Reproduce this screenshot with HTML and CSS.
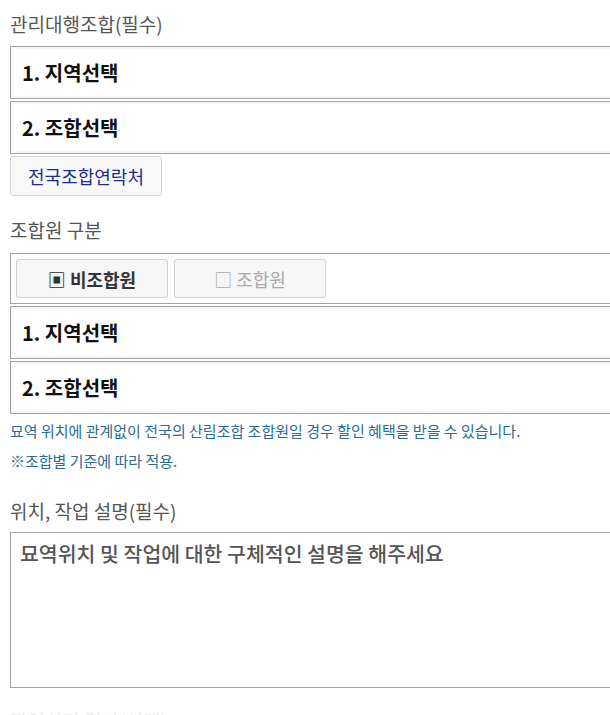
FILE: index.html
```html
<!DOCTYPE html>
<html>
<head>
    <title>관리대행 신청</title>
    <link rel="stylesheet" href="styles.css">
</head>
<body>
    <div class="form">
        <div class="field-label">관리대행조합(필수)</div>
        <div class="select-box">1. 지역선택</div>
        <div class="select-box">2. 조합선택</div>
        <button class="contact-btn">전국조합연락처</button>

        <div class="field-label gap-top">조합원 구분</div>
        <div class="member-box">
            <button class="member-btn active">▣ 비조합원</button>
            <button class="member-btn">□ 조합원</button>
        </div>
        <div class="select-box">1. 지역선택</div>
        <div class="select-box">2. 조합선택</div>
        <p class="note">묘역 위치에 관계없이 전국의 산림조합 조합원일 경우 할인 혜택을 받을 수 있습니다.</p>
        <p class="note second">※조합별 기준에 따라 적용.</p>

        <div class="field-label gap-top2">위치, 작업 설명(필수)</div>
        <textarea class="desc" placeholder="묘역위치 및 작업에 대한 구체적인 설명을 해주세요"></textarea>

        <div class="field-label faint">작업희망 일자(선택)</div>
    </div>
</body>
</html>
```

FILE: styles.css
```css
html, body {
    overflow: hidden;
}
body {
    margin: 0;
    background-color: #ffffff;
    font-family: "Noto Sans CJK KR", "Noto Sans", sans-serif;
    color: #333;
}
.form {
    width: 660px;
    padding: 10px 10px;
}
.field-label {
    font-size: 19px;
    color: #555;
    height: 28px;
    line-height: 28px;
    margin-bottom: 8px;
}
.gap-top {
    margin-top: 20px;
    margin-bottom: 9px;
}
.gap-top2 {
    margin-top: 26px;
    margin-bottom: 7px;
}
.faint {
    margin-top: 19px;
    color: #ececec;
}
.select-box {
    height: 51px;
    border: 1px solid #a3a3a3;
    box-shadow: inset 0 0 0 2px #f7f7f7;
    padding-left: 11px;
    font-size: 20px;
    font-weight: bold;
    color: #111;
    line-height: 51px;
    margin-bottom: 2px;
}
.contact-btn {
    display: block;
    width: 152px;
    height: 40px;
    margin-top: 1px;
    background-color: #f8f8f8;
    border: 1px solid #d4d4d4;
    border-radius: 3px;
    font-family: inherit;
    font-size: 18px;
    color: #1f2a8c;
    cursor: pointer;
}
.member-box {
    display: flex;
    gap: 6px;
    height: 51px;
    border: 1px solid #a3a3a3;
    padding: 5px 5px;
    box-sizing: border-box;
    margin-bottom: 2px;
}
.member-btn {
    width: 152px;
    height: 39px;
    background-color: #f6f6f6;
    border: 1px solid #d0d0d0;
    border-radius: 3px;
    font-family: inherit;
    font-size: 18px;
    color: #aaa;
    cursor: pointer;
}
.member-btn.active {
    font-weight: bold;
    color: #333;
}
.note {
    margin: 6px 0 0;
    font-size: 15px;
    line-height: 21px;
    color: #2b6b95;
}
.note.second {
    margin-top: 9px;
}
.desc {
    display: block;
    width: 100%;
    height: 156px;
    box-sizing: border-box;
    border: 1px solid #a3a3a3;
    padding: 5px 9px;
    font-family: inherit;
    font-size: 20.5px;
    resize: none;
}
.desc::placeholder {
    color: #555;
    font-weight: 500;
}
```
